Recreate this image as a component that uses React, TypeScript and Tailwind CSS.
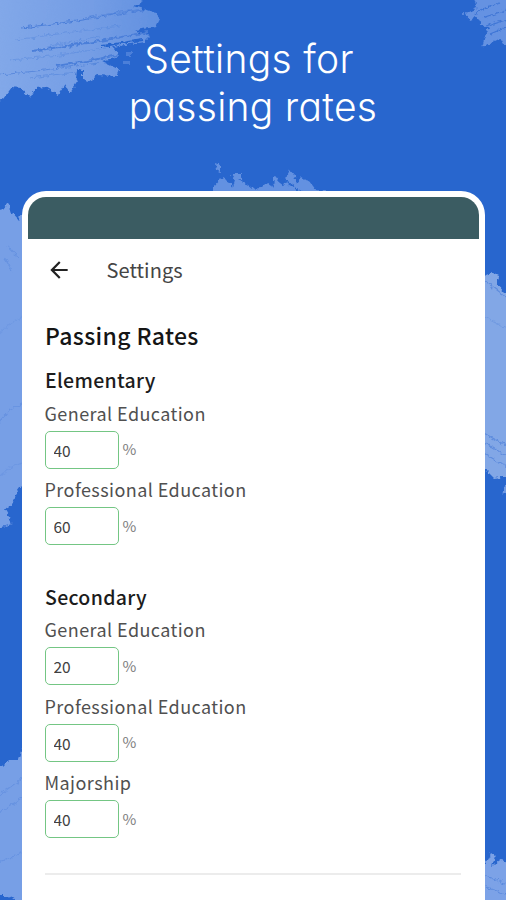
import React from "react";

interface RateFieldProps {
  label: string;
  value: number;
}

interface RateGroup {
  title: string;
  fields: RateFieldProps[];
}

const groups: RateGroup[] = [
  {
    title: "Elementary",
    fields: [
      { label: "General Education", value: 40 },
      { label: "Professional Education", value: 60 },
    ],
  },
  {
    title: "Secondary",
    fields: [
      { label: "General Education", value: 20 },
      { label: "Professional Education", value: 40 },
      { label: "Majorship", value: 40 },
    ],
  },
];

// Paint strokes behind the phone, the filter roughens their edges
const Backdrop: React.FC = () => (
  <svg
    className="absolute inset-0"
    width="506"
    height="900"
    viewBox="0 0 506 900"
    aria-hidden="true"
  >
    <defs>
      <filter id="rough" x="-5%" y="-5%" width="110%" height="110%">
        <feTurbulence type="fractalNoise" baseFrequency="0.22" numOctaves="2" seed="4" />
        <feDisplacementMap in="SourceGraphic" scale="6" xChannelSelector="R" yChannelSelector="G" />
        <feGaussianBlur stdDeviation="0.45" />
      </filter>
      <linearGradient id="paint" x1="0" y1="0" x2="1" y2="0">
        <stop offset="0" stopColor="#83a9e9" />
        <stop offset="0.6" stopColor="#749de5" />
        <stop offset="1" stopColor="#6190e0" />
      </linearGradient>
    </defs>
    <g filter="url(#rough)">
      {/* Top left */}
      <path
        fill="url(#paint)"
        d="M-10 -10H137L143 2 134 6 154 12 160 19 156 27 135 30 150 36 144 42 112 47 120 56 102 61 119 69 116 76 97 75 88 81 80 78 70 93 65 85 58 95 45 87 36 88 30 98 21 88 12 87 3 99 -10 105Z"
      />
      <g fill="none" stroke="#4c7fd9" strokeWidth="1.2">
        <path d="M22 28 76 21 143 10" />
        <path d="M32 51 100 41 148 32" strokeWidth="2" />
        <path d="M57 66 93 60 118 55" strokeWidth="2" />
        <path d="M0 75 45 70 98 63" opacity=".7" />
        <path d="M15 40 65 33 120 26" opacity=".4" />
        <path d="M85 18 120 12 145 9" opacity=".7" />
        <path d="M50 46 100 37" opacity=".4" />
        <path d="M10 60 60 55 105 48" opacity=".4" />
        <path d="M30 78 76 72" opacity=".5" />
        <path d="M102 46 142 40" strokeWidth="2" stroke="#2866ce" />
      </g>
      <path fill="#2866ce" d="M77 69 82 71 82 80 76 79Z" />
      <path fill="#4c7fd9" d="M126 52H132V56H126ZM124 62H129V64H124Z" />
      {/* Top right */}
      <path
        fill="#6592e2"
        d="M472 -8H516V45L504 45 500 38 492 42 482 48 485 36 489 29 482 25 477 17 469 20 466 13 477 8Z"
      />
      <g fill="none" stroke="#3e75d5" strokeWidth="1.3">
        <path d="M480 10 500 3" />
        <path d="M483 18 510 9" />
        <path d="M486 26 512 18" />
        <path d="M490 34 512 25" />
        <path d="M474 14 488 7" />
      </g>
      <path fill="#5787dd" d="M461 12H465V15H461Z" />
      {/* Above the phone */}
      <path
        fill="#6391e1"
        d="M213 200 213 188 222 178 229 182 232 187 235 176 242 181 252 189 260 188 266 182 272 187 276 180 284 186 289 169 295 176 297 183 302 177 310 182 316 190 332 192 332 200Z"
      />
      <path fill="#6391e1" d="M215 163 220 165 220 172 216 170Z" />
      <path fill="#6391e1" d="M231 174 242 174 241 178 235 179Z" />
      <path fill="#6391e1" d="M273 177 279 178 278 182 273 182Z" />
      <path fill="none" stroke="#2866ce" strokeWidth="1.5" d="M280 177 303 194" />
      {/* Left middle */}
      <path
        fill="#779fe6"
        d="M-10 209 2 211 9 203 12 213 18 220 21 215 30 215V485L20 487 15 494 12 505 5 510 13 524 2 527 -10 529Z"
      />
      <g fill="none" stroke="#5c8bde" strokeWidth="1.3" opacity=".6">
        <path d="M4 257 13 272M8 246 18 257" />
        <path d="M-4 336 10 324 25 315" opacity=".5" />
        <path d="M-4 425 10 410 24 403" />
        <path d="M-4 479 11 467 25 462" opacity=".6" />
      </g>
      {/* Right middle */}
      <path
        fill="#82a7e6"
        d="M480 281 486 275 491 273 499 277 496 283 504 292 516 292V477L502 477 494 478 488 472 480 469Z"
      />
      <g fill="none" stroke="#5e8cdd" strokeWidth="1.1">
        <path d="M484 280 510 300" />
        <path d="M484 317 508 329" opacity=".5" />
        <path d="M482 432 512 449M482 441 512 460M482 452 512 470" />
      </g>
      <path fill="#6f9ae4" d="M503 487 510 483V496L503 492Z" />
      {/* Bottom left */}
      <path
        fill="#779fe6"
        d="M-10 764 3 766 9 760 19 760 23 748 31 745V907L15 900 9 896 -10 896Z"
      />
      <g fill="none" stroke="#5c8bde" strokeWidth="1.3" opacity=".6">
        <path d="M-5 798 24 777M-5 815 24 797" />
        <path d="M-5 865 24 852" />
      </g>
      {/* Bottom right */}
      <path
        fill="#7ba2e7"
        d="M480 862 486 863 491 853 495 856 492 866 502 859 507 865 512 871 516 910H480Z"
      />
      <path fill="none" stroke="#5c8bde" d="M484 875 510 885M484 886 510 896" />
    </g>
  </svg>
);

const RateField: React.FC<RateFieldProps> = ({ label, value }) => (
  <div className="h-[76.5px]">
    <div className="h-[31px] text-[18px] leading-[27px] tracking-[0.43px] text-[#505050]">
      {label}
    </div>
    <div className="flex items-center">
      <input
        type="text"
        defaultValue={value}
        className="h-[38px] w-[74px] rounded-[5px] border-[1.5px] border-[#74c684] bg-white px-2 text-[15.5px] text-[#404040] outline-none"
      />
      <span className="ml-1 text-[15px] text-[#808080]">%</span>
    </div>
  </div>
);

const App: React.FC = () => {
  return (
    <div className="relative flex h-[900px] w-[506px] flex-col overflow-hidden bg-[#2866ce]">
      <Backdrop />

      {/* Headline */}
      <h1 className="relative h-[191px] pt-[35px] text-center font-['Inter',sans-serif] text-[39px] leading-[48px] font-light tracking-[0.3px] whitespace-nowrap text-white [font-feature-settings:'cv11']">
        <span className="block pr-2">Settings for</span>
        <span className="block">passing rates</span>
      </h1>

      {/* Phone */}
      <div className="relative ml-[22px] flex w-[462.5px] flex-1 flex-col rounded-t-[24px] bg-white px-[6px] pt-[6px] font-['Noto_Sans_CJK_JP',sans-serif]">
        <div className="h-[42px] shrink-0 rounded-t-[18px] bg-[#3b5c62]" />

        <header className="flex h-[62px] items-center pl-[17.5px]">
          <svg width="26" height="26" viewBox="0 0 24 24" fill="#222222">
            <path d="M20 11H7.83l5.59-5.59L12 4l-8 8 8 8 1.41-1.41L7.83 13H20v-2z" />
          </svg>
          <span className="ml-[35px] text-[20px] leading-7 tracking-[0.05px] text-[#454545]">
            Settings
          </span>
        </header>

        <main className="pr-[18px] pl-[16.5px] pt-[18px]">
          <h2 className="h-[46px] pl-[0.5px] text-[23px] leading-[32px] font-medium tracking-[0.35px] text-[#151515]">
            Passing Rates
          </h2>
          {groups.map((group) => (
            <section key={group.title} className="mb-[29px] last-of-type:mb-[27px]">
              <h3 className="h-[34.5px] pl-[0.5px] text-[19.5px] leading-[30px] font-medium tracking-[0.3px] text-[#1c1c1c]">
                {group.title}
              </h3>
              {group.fields.map((field) => (
                <RateField key={field.label} {...field} />
              ))}
            </section>
          ))}
          <hr className="border-t-2 border-[#ececec]" />
        </main>
      </div>
    </div>
  );
};

export default App;
